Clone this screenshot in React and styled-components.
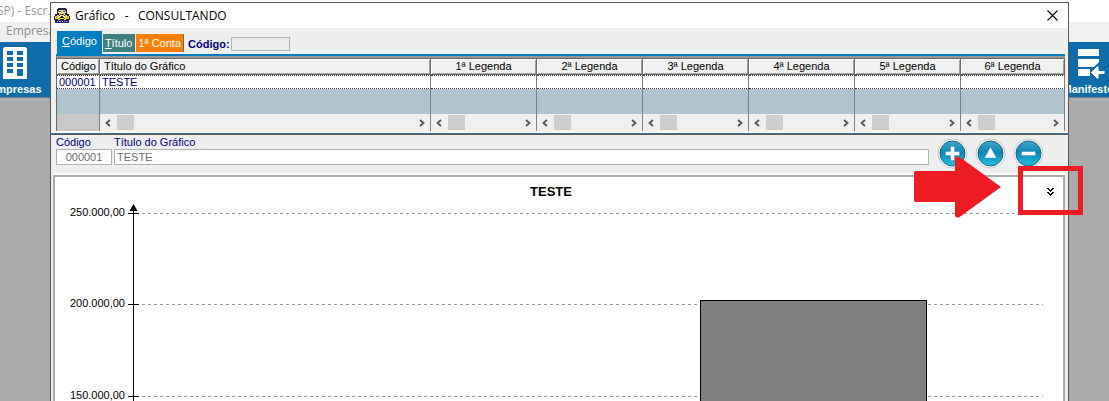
import React from 'react';
import styled, { createGlobalStyle } from 'styled-components';

const GlobalStyle = createGlobalStyle`
  * {
    box-sizing: border-box;
  }

  body {
    margin: 0;
    overflow: hidden;
    font-family: 'Liberation Sans', Arial, sans-serif;
    font-size: 11px;
    color: #000000;
  }

  button, input {
    font: inherit;
  }
`;

const Desktop = styled.div`
  position: relative;
  height: 100vh;
  overflow: hidden;
  background-color: #ababab;
`;

const AppTitle = styled.div`
  height: 22px;
  padding-top: 2px;
  margin-left: -3px;
  background-color: #ffffff;
  font-family: 'Open Sans', sans-serif;
  font-size: 12px;
  line-height: 18px;
  color: #9a9a9a;
`;

const AppMenu = styled.nav`
  height: 20px;
  padding-left: 6px;
  background-color: #f0f0f0;
`;

const MenuItem = styled.button`
  padding: 0;
  border: none;
  background: none;
  font-family: 'Open Sans', sans-serif;
  font-size: 12px;
  line-height: 18px;
  color: #8f8f8f;
`;

const Toolbar = styled.div`
  display: flex;
  justify-content: space-between;
  height: 56px;
  margin: 0 -11px;
  background-color: #0f6cab;
  border-bottom: 1px solid #6d7f8c;
`;

const ToolButton = styled.button`
  display: flex;
  flex-direction: column;
  align-items: center;
  gap: 2px;
  padding: 5px 0 0;
  border: none;
  background: none;
  color: #ffffff;
  font-weight: 700;
  line-height: 14px;
`;

const Dialog = styled.section`
  position: absolute;
  top: 2px;
  left: 50px;
  right: 40px;
  bottom: 0;
  display: flex;
  flex-direction: column;
  overflow: hidden;
  background-color: #efefef;
  border: 1px solid #585858;
  border-bottom: none;
`;

const TitleBar = styled.header`
  display: flex;
  flex: none;
  align-items: center;
  gap: 5px;
  height: 25px;
  padding: 0 10px 0 3px;
  background-color: #ffffff;
`;

const DialogTitle = styled.h1`
  flex: 1;
  margin: 0;
  font-family: 'Open Sans', sans-serif;
  font-size: 12px;
  font-weight: 400;
  line-height: 18px;
  white-space: pre;
`;

const IconButton = styled.button`
  display: flex;
  padding: 0;
  border: none;
  background: none;
`;

const TabBar = styled.div`
  display: flex;
  flex: none;
  align-items: flex-end;
  height: 28px;
  margin: 0 3px 0 5px;
  padding-left: 1px;
  border-bottom: 2px solid #007cc0;
`;

const Tab = styled.button`
  height: ${({ $active }) => ($active ? '23px' : '18px')};
  margin-right: 1px;
  margin-bottom: ${({ $active }) => ($active ? '0' : '2px')};
  padding: ${({ $active }) => ($active ? '0 5px 4px' : '0 2px')};
  border: none;
  border-right: ${({ $active }) => ($active ? 'none' : '1px solid #6b6b6b')};
  background-color: ${({ $color }) => $color};
  color: #ffffff;
  white-space: nowrap;
`;

const SearchLabel = styled.label`
  display: flex;
  align-items: center;
  gap: 1px;
  height: 18px;
  margin: 0 0 1px 3px;
  font-weight: 700;
  color: #000080;
`;

const SearchInput = styled.input`
  width: 59px;
  height: 14px;
  padding: 0 2px;
  border: 1px solid #adb2b5;
  background-color: #ebebeb;
`;

const GridFrame = styled.div`
  flex: none;
  margin: 0 3px 0 5px;
  border-top: 2px solid #969696;
  border-left: 1px solid #696969;
`;

const Grid = styled.table`
  width: 100%;
  table-layout: fixed;
  border-collapse: separate;
  border-spacing: 0;
  background-color: #b0c4cf;
`;

const Col = styled.col`
  width: ${({ $width }) => $width};
`;

const HeadCell = styled.th`
  height: 17px;
  padding: 0 4px;
  background-color: #f0f0f0;
  border-top: 1px solid #696969;
  border-right: 1px solid #696969;
  border-bottom: 1px solid #696969;
  box-shadow: inset 1px 1px #ffffff, inset -1px -1px #a0a0a0;
  font-weight: 400;
  line-height: 15px;
  text-align: ${({ $align }) => $align || 'center'};
  white-space: nowrap;
`;

const Cell = styled.td`
  height: 14px;
  padding: 0 2px;
  background-color: #ffffff;
  border-top: 1px dotted #4a3838;
  border-bottom: 1px dotted #4a3838;
  border-right: 1px solid #808080;
  line-height: 12px;
  color: #000080;
  white-space: nowrap;
`;

const EmptyCell = styled.td`
  height: 25px;
  padding: 0;
  border-right: 1px solid #808080;
`;

const ScrollCell = styled.td`
  height: 17px;
  padding: 0;
  border-right: 1px solid #808080;
  background-color: ${({ $blank }) => ($blank ? '#c8c8c8' : '#f0f0f0')};
`;

const ScrollBar = styled.div`
  display: flex;
  align-items: center;
  justify-content: space-between;
  height: 17px;
  padding: 0 5px;
`;

const ScrollStart = styled.div`
  display: flex;
  align-items: center;
  gap: 6px;
`;

const Thumb = styled.div`
  width: 17px;
  height: 15px;
  background-color: #cdcdcd;
`;

const Divider = styled.div`
  flex: none;
  height: 4px;
  background-color: #3c7299;
  border-top: 2px solid #ffffff;
  border-bottom: 1px solid #585858;
`;

const Form = styled.form`
  display: flex;
  flex: none;
  align-items: flex-start;
  gap: 2px;
  height: 40px;
  padding: 0 24px 0 5px;
`;

const Field = styled.label`
  display: flex;
  flex-direction: column;
  flex: ${({ $grow }) => ($grow ? '1' : 'none')};
  width: ${({ $grow }) => ($grow ? 'auto' : '56px')};
  color: #000080;
  line-height: 14px;
`;

const FieldInput = styled.input`
  width: 100%;
  height: 16px;
  padding: 0 2px;
  border: 1px solid #adb2b5;
  background-color: #ffffff;
  color: #6d6d6d;
  text-align: ${({ $center }) => ($center ? 'center' : 'left')};
`;

const Actions = styled.div`
  display: flex;
  gap: 7px;
  padding: 3px 0 0 6px;
`;

const ChartPanel = styled.div`
  display: flex;
  flex: 1;
  flex-direction: column;
  margin: 0 3px 0 2px;
  border: 2px solid #adadad;
  border-bottom: none;
  background-color: #ffffff;
  box-shadow: 0 -2px #ffffff;
`;

const ChartHeader = styled.div`
  display: flex;
  flex: none;
  align-items: center;
  height: 27px;
  padding: 2px 9px 0 0;
`;

const ChartTitle = styled.h2`
  flex: 1;
  margin: 0;
  font-size: 13px;
  line-height: 16px;
  text-align: center;
`;

const ChartSvg = styled.svg`
  display: block;
  width: 100%;
  height: 240px;
  flex: none;
  font-size: 11px;
`;

const Arrow = styled.svg`
  position: absolute;
  top: 156px;
  right: 107px;
`;

const Highlight = styled.div`
  position: absolute;
  top: 166px;
  right: 26px;
  width: 65px;
  height: 49px;
  border: 5px solid #ee1c24;
  pointer-events: none;
`;

const legends = ['1ª Legenda', '2ª Legenda', '3ª Legenda', '4ª Legenda', '5ª Legenda', '6ª Legenda'];

const ticks = [
  { label: '250.000,00', y: 9 },
  { label: '200.000,00', y: 100 },
  { label: '150.000,00', y: 192 },
];

const BuildingIcon = () => (
  <svg width="26" height="33" viewBox="0 0 26 33" aria-hidden="true">
    <path d="M2 0h22v1h1v31H1V1h1z" fill="#ffffff" />
    <g fill="#0f6cab">
      {[4, 10, 16, 22].map((y) => (
        <React.Fragment key={y}>
          <rect x="5" y={y} width="6" height="4" />
          <rect x="15" y={y} width="6" height={y === 22 ? 7 : 4} />
        </React.Fragment>
      ))}
    </g>
  </svg>
);

const ManifestIcon = () => (
  <svg width="28" height="33" viewBox="0 0 28 33" aria-hidden="true">
    <g fill="#ffffff">
      <path d="M1 2h21v7H1zM1 12h21v3l-5 5H1zM1 22h12v7H1z" />
      <path d="M13.500 25.500l6.500-6.500h2v4.500h6v4h-6V32h-2z" stroke="#0f6cab" />
    </g>
  </svg>
);

const PersonIcon = () => (
  <svg width="16" height="16" viewBox="0 0 16 16" shapeRendering="crispEdges" aria-hidden="true">
    <path d="M4 0h8v1h1v5h2v2h1v4h-1v3H1v-3H0V8h1V6h2V1h1z" fill="#20203c" />
    <path d="M5 2h6v1h1v2h-1v2h-1v1H6V7H5V5H4V3h1z" fill="#ead59b" />
    <path d="M5 3h2v1H5zM9 3h2v1H9zM6 6h4v1H6z" fill="#55452c" />
    <path d="M1 8h2V7h2v2h1v1h4V9h1V7h2v1h2v3h-3v1h-2v-1H6v1H4v-1H1z" fill="#ead43b" />
    <path d="M5 8h2v1H5zM9 8h2v1H9z" fill="#ffffff" />
    <path d="M2 9h1v1H2zM13 9h1v1h-1zM5 10h1v1H5zM10 10h1v1h-1z" fill="#8c7925" />
    <path d="M1 12h14v3H1z" fill="#24246f" />
    <path d="M3 13h1v1H3zM5 13h2v1H5zM8 13h1v1H8zM10 13h1v1h-1zM12 13h1v1h-1z" fill="#a9a9c7" />
  </svg>
);

const CloseIcon = () => (
  <svg width="11" height="11" viewBox="0 0 11 11" aria-hidden="true">
    <path d="M.5.5l10 10M10.500.5l-10 10" stroke="#000000" strokeWidth="1.1" />
  </svg>
);

const Chevron = ({ right }) => (
  <svg width="6" height="8" viewBox="0 0 6 8" aria-hidden="true">
    <path d={right ? 'M1 1l3.500 3L1 7' : 'M5 1L1.500 4 5 7'} fill="none" stroke="#555555" strokeWidth="1.800" />
  </svg>
);

const DoubleChevron = () => (
  <svg width="7" height="8" viewBox="0 0 7 8" shapeRendering="crispEdges" aria-hidden="true">
    <path
      d="M0 0h2v1h1v1h1V1h1V0h2v1H6v1H5v1H4v1H3V3H2V2H1V1H0zM0 4h2v1h1v1h1V5h1V4h2v1H6v1H5v1H4v1H3V7H2V6H1V5H0z"
      fill="#000000"
    />
  </svg>
);

const glyphs = {
  plus: 'M13.500 8.500h4v5h5v4h-5v5h-4v-5h-5v-4h5z',
  up: 'M15.500 9l6 11h-12z',
  minus: 'M8.500 13.500h14v4h-14z',
};

const RoundIcon = ({ name }) => (
  <svg width="31" height="31" viewBox="0 0 31 31" aria-hidden="true">
    <defs>
      <linearGradient id={`shade-${name}`} x1="0" y1="0" x2="0" y2="1">
        <stop offset="0" stopColor="#3fa6c8" />
        <stop offset="0.450" stopColor="#0e86b4" />
        <stop offset="1" stopColor="#22bfe2" />
      </linearGradient>
    </defs>
    <circle cx="15.500" cy="15.500" r="14.500" fill="#f8f8f8" stroke="#cccccc" />
    <circle cx="15.500" cy="15.500" r="12.500" fill={`url(#shade-${name})`} stroke="#17678c" />
    <path d={glyphs[name]} fill="#ffffff" stroke="#0d6c95" strokeOpacity="0.500" strokeWidth="0.600" />
  </svg>
);

const ColumnScroll = () => (
  <ScrollBar>
    <ScrollStart>
      <Chevron />
      <Thumb />
    </ScrollStart>
    <Chevron right />
  </ScrollBar>
);

const ChartGrid = () => (
  <Grid>
    <colgroup>
      <Col $width="43px" />
      <Col $width="331px" />
      {legends.map((legend, i) => (
        <Col key={legend} $width={i === legends.length - 1 ? 'auto' : '106px'} />
      ))}
    </colgroup>
    <thead>
      <tr>
        <HeadCell $align="left">Código</HeadCell>
        <HeadCell $align="left">Título do Gráfico</HeadCell>
        {legends.map((legend) => (
          <HeadCell key={legend}>{legend}</HeadCell>
        ))}
      </tr>
    </thead>
    <tbody>
      <tr>
        <Cell>000001</Cell>
        <Cell>TESTE</Cell>
        {legends.map((legend) => (
          <Cell key={legend} />
        ))}
      </tr>
      <tr>
        <EmptyCell />
        <EmptyCell />
        {legends.map((legend) => (
          <EmptyCell key={legend} />
        ))}
      </tr>
      <tr>
        <ScrollCell $blank />
        <ScrollCell><ColumnScroll /></ScrollCell>
        {legends.map((legend) => (
          <ScrollCell key={legend}><ColumnScroll /></ScrollCell>
        ))}
      </tr>
    </tbody>
  </Grid>
);

const BarChart = () => (
  <ChartSvg role="img" aria-label="TESTE">
    {ticks.map(({ label, y }) => (
      <g key={label} shapeRendering="crispEdges">
        <text x="70" y={y + 3} textAnchor="end">{label}</text>
        <line x1="87" x2="98%" y1={y + 0.5} y2={y + 0.5} stroke="#999999" strokeDasharray="3 3" />
        <line x1="73" x2="84" y1={y + 0.5} y2={y + 0.5} stroke="#000000" />
      </g>
    ))}
    <path d="M78.500 5V240" stroke="#000000" shapeRendering="crispEdges" />
    <path d="M78.500 0l4 7h-8z" />
    <rect x="64%" y="96.500" width="22.500%" height="150" fill="#808080" stroke="#000000" shapeRendering="crispEdges" />
  </ChartSvg>
);

const App = () => {
  return (
    <Desktop>
      <GlobalStyle />
      <AppTitle>SP) - Escr.Fiscal</AppTitle>
      <AppMenu>
        <MenuItem type="button">Empresas</MenuItem>
      </AppMenu>
      <Toolbar>
        <ToolButton type="button"><BuildingIcon />Empresas</ToolButton>
        <ToolButton type="button"><ManifestIcon />Manifestos</ToolButton>
      </Toolbar>

      <Dialog role="dialog" aria-labelledby="dialog-title">
        <TitleBar>
          <PersonIcon />
          <DialogTitle id="dialog-title">{'Gráfico   -   CONSULTANDO'}</DialogTitle>
          <IconButton type="button" aria-label="Fechar"><CloseIcon /></IconButton>
        </TitleBar>

        <TabBar>
          <Tab type="button" $active $color="#007cc0"><u>C</u>ódigo</Tab>
          <Tab type="button" $color="#3f8080"><u>T</u>ítulo</Tab>
          <Tab type="button" $color="#ff8000">1ª Conta</Tab>
          <SearchLabel>
            Código:
            <SearchInput type="text" />
          </SearchLabel>
        </TabBar>

        <GridFrame>
          <ChartGrid />
        </GridFrame>
        <Divider />

        <Form onSubmit={(e) => e.preventDefault()}>
          <Field>
            Código
            <FieldInput type="text" defaultValue="000001" $center />
          </Field>
          <Field $grow>
            Título do Gráfico
            <FieldInput type="text" defaultValue="TESTE" />
          </Field>
          <Actions>
            <IconButton type="button" aria-label="Adicionar"><RoundIcon name="plus" /></IconButton>
            <IconButton type="button" aria-label="Alterar"><RoundIcon name="up" /></IconButton>
            <IconButton type="button" aria-label="Remover"><RoundIcon name="minus" /></IconButton>
          </Actions>
        </Form>

        <ChartPanel>
          <ChartHeader>
            <ChartTitle>TESTE</ChartTitle>
            <IconButton type="button" aria-label="Opções"><DoubleChevron /></IconButton>
          </ChartHeader>
          <BarChart />
        </ChartPanel>
      </Dialog>

      <Arrow width="88" height="62" viewBox="0 0 88 62" aria-hidden="true">
        <path d="M1 15h40V2q2-3 6 0l40 29-40 29q-4 3-6 0V46H1q-1-1-1-2V17q0-1 1-2z" fill="#ee1c24" />
      </Arrow>
      <Highlight />
    </Desktop>
  );
};

export default App;
